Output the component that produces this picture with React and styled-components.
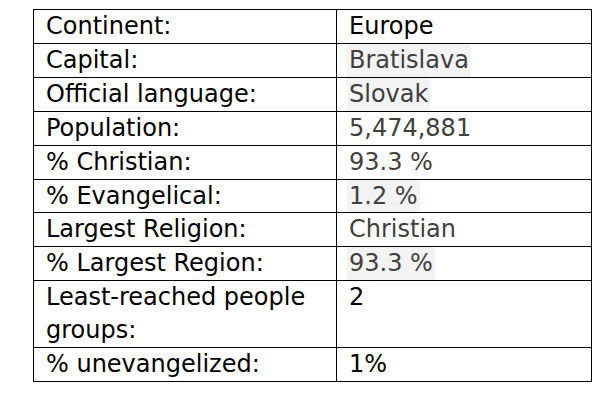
import React from 'react'
import styled, { createGlobalStyle } from 'styled-components'

const GlobalStyle = createGlobalStyle`
  html, body {
    margin: 0;
    padding: 0;
    background: #fff;
  }
`

const rows = [
  { label: 'Continent:', value: 'Europe', tone: 'dark' },
  { label: 'Capital:', value: 'Bratislava', tone: 'grey', marked: true },
  { label: 'Official language:', value: 'Slovak', tone: 'grey', marked: true },
  { label: 'Population:', value: '5,474,881', tone: 'grey' },
  { label: '% Christian:', value: '93.3 %', tone: 'grey' },
  { label: '% Evangelical:', value: '1.2 %', tone: 'grey', marked: true },
  { label: 'Largest Religion:', value: 'Christian', tone: 'grey' },
  { label: '% Largest Region:', value: '93.3 %', tone: 'grey', marked: true },
  { label: 'Least-reached people groups:', value: '2', tone: 'dark' },
  { label: '% unevangelized:', value: '1%', tone: 'dark' },
]

const Page = styled.div`
  padding: 9px 0 0 33px;
`

const Table = styled.table`
  border-collapse: collapse;
  width: 559px;
  table-layout: fixed;
  font-family: 'DejaVu Sans', sans-serif;
  font-size: 24px;
  line-height: 32.9px;
  color: #000;
`

const Cell = styled.td`
  border: 1px solid #000;
  padding: 0 8px 0 12px;
  vertical-align: top;
`

const Value = styled.span`
  display: inline-block;
  color: ${(p) => (p.$tone === 'grey' ? '#404040' : '#000')};
  background: ${(p) => (p.$marked ? '#f3f3f3' : 'transparent')};
  margin-left: -2px;
  padding: 0 2px;
`

const App = () => {
  return (
    <Page>
      <GlobalStyle />
      <Table>
        <colgroup>
          <col style={{ width: 303 }} />
          <col />
        </colgroup>
        <tbody>
          {rows.map((r) => (
            <tr key={r.label}>
              <Cell>{r.label}</Cell>
              <Cell>
                <Value $tone={r.tone} $marked={r.marked}>
                  {r.value}
                </Value>
              </Cell>
            </tr>
          ))}
        </tbody>
      </Table>
    </Page>
  )
}

export default App
